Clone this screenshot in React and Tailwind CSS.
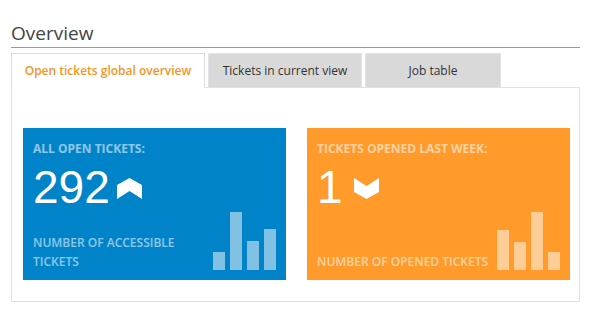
import React from 'react';

const font = "font-['Open_Sans',sans-serif]";

function ArrowUp() {
  return (
    <svg width="25" height="21" viewBox="0 0 25 21" className="ml-[7px] mt-[2px]">
      <polygon points="0,7 12.5,0 25,7 25,21 12.5,13 0,21" fill="#fff" />
    </svg>
  );
}

function ArrowDown() {
  return (
    <svg width="25" height="21" viewBox="0 0 25 21" className="ml-[11px] mt-[2px]">
      <polygon points="0,0 12.5,8 25,0 25,14 12.5,21 0,14" fill="#fff" />
    </svg>
  );
}

function Bars({ heights }) {
  return (
    <div className="flex items-end gap-[5px] mb-[1px]">
      {heights.map((h, i) => (
        <div key={i} className="w-[12px] bg-white/50" style={{ height: h }} />
      ))}
    </div>
  );
}

function StatCard({ color, label, value, arrow, children, bars }) {
  return (
    <div className={`flex-1 h-[152px] ${color} flex flex-col pt-[13px] pb-[9px] pl-[10px] pr-[10px]`}>
      <div className={`${font} text-[12px] leading-[16px] font-bold text-white/55`}>{label}</div>
      <div className="flex items-center mt-[7px]">
        <span className="font-['Liberation_Sans',Arial,sans-serif] text-[46px] leading-[46px] text-white">
          {value}
        </span>
        {arrow}
      </div>
      <div className="flex-1" />
      <div className="flex items-end justify-between">
        <div className={`${font} text-[12px] leading-[19px] font-semibold text-white/55 whitespace-nowrap`}>
          {children}
        </div>
        <Bars heights={bars} />
      </div>
    </div>
  );
}

export default function App() {
  return (
    <div className={`w-[600px] h-[316px] bg-white pl-[11px] pt-[20px] ${font}`}>
      <div className="w-[569px]">
        {/* title */}
        <h1 className="text-[19px] leading-[27px] text-[#444] border-b border-[#999]">Overview</h1>

        {/* tabs */}
        <div className="flex mt-[5px] h-[34px] text-[12px]">
          <div className="relative z-10 w-[194px] h-[35px] bg-white border border-b-0 border-[#dedede] flex items-center justify-center font-semibold text-[#f7941d]">
            Open tickets global overview
          </div>
          <div className="ml-[3px] w-[154px] bg-[#d9d9d9] border border-b-0 border-[#e3e3e3] flex items-center justify-center text-[#333]">
            Tickets in current view
          </div>
          <div className="ml-[3px] w-[136px] bg-[#d9d9d9] border border-b-0 border-[#e3e3e3] flex items-center justify-center text-[#333]">
            Job table
          </div>
        </div>

        {/* panel */}
        <div className="h-[215px] border border-[#dfe3e7] pt-[40px] pl-[11px] pr-[9px]">
          <div className="flex gap-[21px]">
            <StatCard
              color="bg-[#0083c9]"
              label="ALL OPEN TICKETS:"
              value="292"
              arrow={<ArrowUp />}
              bars={[18, 58, 29, 41]}
            >
              NUMBER OF ACCESSIBLE
              <br />
              TICKETS
            </StatCard>
            <StatCard
              color="bg-[#ff9a2b]"
              label="TICKETS OPENED LAST WEEK:"
              value="1"
              arrow={<ArrowDown />}
              bars={[40, 28, 58, 18]}
            >
              NUMBER OF OPENED TICKETS
            </StatCard>
          </div>
        </div>
      </div>
    </div>
  );
}
